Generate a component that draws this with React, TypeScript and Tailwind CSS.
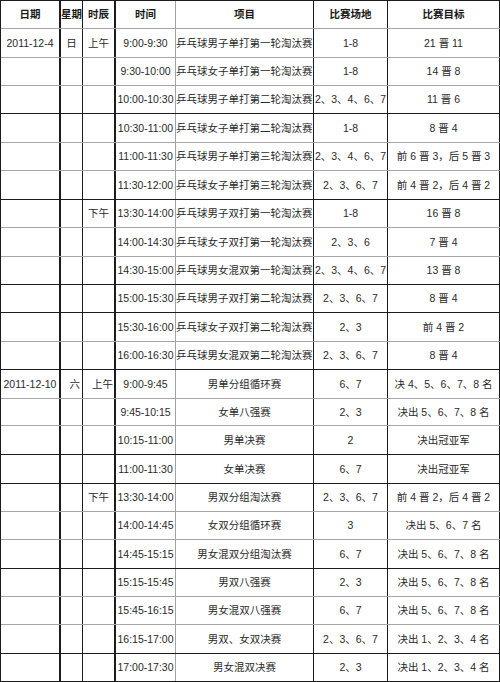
import React from 'react';

type Row = {
  h: string;
  dark: boolean;
  date?: string;
  week?: string;
  period?: string;
  periodRight?: boolean;
  time: string;
  item: string;
  itemLeft?: boolean;
  venue: string;
  target: string;
};

const rows: Row[] = [
  { h: 'h-[29px]', dark: false, date: '2011-12-4', week: '日', period: '上午', time: '9:00-9:30', item: '乒乓球男子单打第一轮淘汰赛', itemLeft: true, venue: '1-8', target: '21 晋 11' },
  { h: 'h-[28px]', dark: false, time: '9:30-10:00', item: '乒乓球女子单打第一轮淘汰赛', itemLeft: true, venue: '1-8', target: '14 晋 8' },
  { h: 'h-[28px]', dark: true, time: '10:00-10:30', item: '乒乓球男子单打第二轮淘汰赛', itemLeft: true, venue: '2、3、4、6、7', target: '11 晋 6' },
  { h: 'h-[29px]', dark: false, time: '10:30-11:00', item: '乒乓球女子单打第二轮淘汰赛', itemLeft: true, venue: '1-8', target: '8 晋 4' },
  { h: 'h-[28px]', dark: false, time: '11:00-11:30', item: '乒乓球男子单打第三轮淘汰赛', itemLeft: true, venue: '2、3、4、6、7', target: '前 6 晋 3，后 5 晋 3' },
  { h: 'h-[29px]', dark: true, time: '11:30-12:00', item: '乒乓球女子单打第三轮淘汰赛', itemLeft: true, venue: '2、3、6、7', target: '前 4 晋 2，后 4 晋 2' },
  { h: 'h-[28px]', dark: false, period: '下午', time: '13:30-14:00', item: '乒乓球男子双打第一轮淘汰赛', itemLeft: true, venue: '1-8', target: '16 晋 8' },
  { h: 'h-[29px]', dark: false, time: '14:00-14:30', item: '乒乓球女子双打第一轮淘汰赛', itemLeft: true, venue: '2、3、6', target: '7 晋 4' },
  { h: 'h-[28px]', dark: true, time: '14:30-15:00', item: '乒乓球男女混双第一轮淘汰赛', itemLeft: true, venue: '2、3、4、6、7', target: '13 晋 8' },
  { h: 'h-[28px]', dark: true, time: '15:00-15:30', item: '乒乓球男子双打第二轮淘汰赛', itemLeft: true, venue: '2、3、6、7', target: '8 晋 4' },
  { h: 'h-[29px]', dark: false, time: '15:30-16:00', item: '乒乓球女子双打第二轮淘汰赛', itemLeft: true, venue: '2、3', target: '前 4 晋 2' },
  { h: 'h-[28px]', dark: true, time: '16:00-16:30', item: '乒乓球男女混双第二轮淘汰赛', itemLeft: true, venue: '2、3、6、7', target: '8 晋 4' },
  { h: 'h-[29px]', dark: false, date: '2011-12-10', week: '六', period: '上午', periodRight: true, time: '9:00-9:45', item: '男单分组循环赛', venue: '6、7', target: '决 4、5、6、7、8 名' },
  { h: 'h-[27px]', dark: false, time: '9:45-10:15', item: '女单八强赛', venue: '2、3', target: '决出 5、6、7、8 名' },
  { h: 'h-[29px]', dark: true, time: '10:15-11:00', item: '男单决赛', venue: '2', target: '决出冠亚军' },
  { h: 'h-[29px]', dark: true, time: '11:00-11:30', item: '女单决赛', venue: '6、7', target: '决出冠亚军' },
  { h: 'h-[28px]', dark: false, period: '下午', time: '13:30-14:00', item: '男双分组淘汰赛', venue: '2、3、6、7', target: '前 4 晋 2，后 4 晋 2' },
  { h: 'h-[28px]', dark: false, time: '14:00-14:45', item: '女双分组循环赛', venue: '3', target: '决出 5、6、7 名' },
  { h: 'h-[29px]', dark: true, time: '14:45-15:15', item: '男女混双分组淘汰赛', venue: '6、7', target: '决出 5、6、7、8 名' },
  { h: 'h-[28px]', dark: false, time: '15:15-15:45', item: '男双八强赛', venue: '2、3', target: '决出 5、6、7、8 名' },
  { h: 'h-[28px]', dark: false, time: '15:45-16:15', item: '男女混双八强赛', venue: '6、7', target: '决出 5、6、7、8 名' },
  { h: 'h-[29px]', dark: true, time: '16:15-17:00', item: '男双、女双决赛', venue: '2、3、6、7', target: '决出 1、2、3、4 名' },
  { h: 'h-[28px]', dark: true, time: '17:00-17:30', item: '男女混双决赛', venue: '2、3', target: '决出 1、2、3、4 名' },
];

const grid = 'grid grid-cols-[60px_22px_33px_60px_138px_74px_112px]';
const cell = 'flex items-center justify-center whitespace-nowrap';

// vertical rules, left to right
const vr = {
  date: 'border-r-2 border-r-[#1c1c1c]',
  week: 'border-r border-r-[#1c1c1c]',
  period: 'border-r-2 border-r-[#1c1c1c]',
  time: 'border-r border-r-[#a3a3a3]',
  item: 'border-r border-r-[#1c1c1c]',
  venue: 'border-r border-r-[#1c1c1c]',
  target: 'border-r border-r-[#1c1c1c]',
};

export default function App() {
  return (
    <div
      className="w-[500px] border-l border-t border-[#1c1c1c] bg-white text-[10.5px] leading-none text-[#2a2a2a]"
      style={{ fontFamily: '"Liberation Sans", "Noto Sans CJK SC", sans-serif' }}
    >
      <div className={`${grid} h-[28px] border-b border-[#a6a6a6] font-bold text-[#1a1a1a]`}>
        <div className={`${cell} ${vr.date}`}>日期</div>
        <div className={`${cell} ${vr.week}`}>星期</div>
        <div className={`${cell} ${vr.period}`}>时辰</div>
        <div className={`${cell} ${vr.time}`}>时间</div>
        <div className={`${cell} ${vr.item}`}>项目</div>
        <div className={`${cell} ${vr.venue}`}>比赛场地</div>
        <div className={`${cell} ${vr.target}`}>比赛目标</div>
      </div>
      {rows.map((r, i) => (
        <div
          key={i}
          className={`${grid} ${r.h} border-b ${r.dark ? 'border-[#1c1c1c]' : 'border-[#a6a6a6]'}`}
        >
          <div className={`${cell} ${vr.date}`}>{r.date}</div>
          <div className={`${cell} ${vr.week} ${r.periodRight ? 'justify-end pr-[2px]' : ''}`}>{r.week}</div>
          <div className={`${cell} ${vr.period} ${r.periodRight ? 'justify-end pr-[1px]' : ''}`}>{r.period}</div>
          <div className={`${cell} ${vr.time}`}>{r.time}</div>
          <div className={`${cell} ${vr.item} ${r.itemLeft ? 'justify-start' : ''}`}>{r.item}</div>
          <div className={`${cell} ${vr.venue}`}>{r.venue}</div>
          <div className={`${cell} ${vr.target}`}>{r.target}</div>
        </div>
      ))}
    </div>
  );
}
